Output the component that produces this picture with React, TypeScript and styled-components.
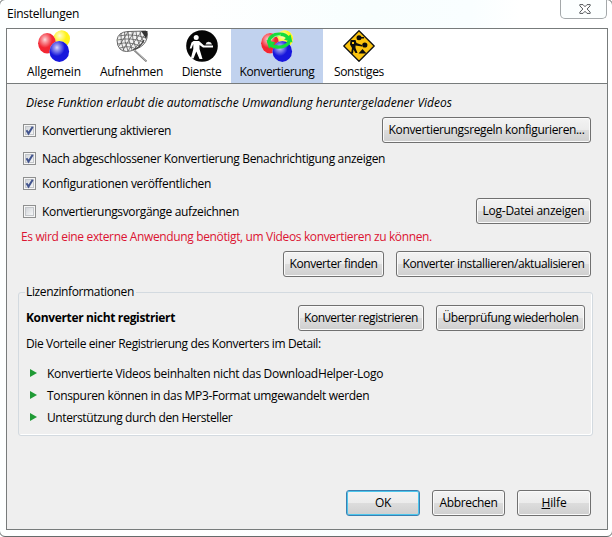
import React from 'react';
import styled, { createGlobalStyle, css } from 'styled-components';

const GlobalStyle = createGlobalStyle`
  * { box-sizing: border-box; }
  html, body { margin: 0; padding: 0; overflow: hidden; background: #fff; }
  body { font: 12px/16px "Open Sans", "Noto Sans", sans-serif; color: #000; }
`;

const Desktop = styled.div`
  width: 612px;
  height: 537px;
  overflow: hidden;
`;

const Window = styled.div`
  display: flex;
  flex-direction: column;
  width: 614px;
  height: 538px;
  margin: -1px 0 0 -1px;
  padding: 0 5px 6px 6px;
  border: 1px solid #666b6b;
  border-radius: 6px;
  background: linear-gradient(90deg, #fdffff 0, #fff 30%, #f8fefe 60%, #f9feff 77%, #fff 85%);
`;

const TitleBar = styled.header`
  display: flex;
  justify-content: space-between;
  height: 28px;
`;

const Text = styled.span<{ $track?: number; $color?: string; $bold?: boolean; $italic?: boolean }>`
  display: block;
  padding-top: 1px;
  margin-bottom: -1px;
  white-space: nowrap;
  letter-spacing: ${p => p.$track ?? -0.35}px;
  color: ${p => p.$color ?? '#000'};
  font-weight: ${p => (p.$bold ? 700 : 400)};
  font-style: ${p => (p.$italic ? 'italic' : 'normal')};
`;

const Title = styled(Text)`
  padding: 6px 0 0 1px;
`;

const CloseButton = styled.button`
  display: flex;
  align-items: center;
  justify-content: center;
  width: 47px;
  height: 19px;
  padding: 0 0 0 2px;
  border: 1px solid #a3a8aa;
  border-top: 0;
  border-radius: 0 0 5px 5px;
  background: #fcffff;
`;

const Client = styled.main`
  display: flex;
  flex-direction: column;
  width: 602px;
  height: 502px;
  border: 1px solid #777b7b;
  background: #efefef;
`;

const Toolbar = styled.nav`
  display: flex;
  gap: 1px;
  height: 55px;
  padding-left: 11px;
  border-bottom: 1px solid #777b7b;
  background: #fff;
`;

const Tab = styled.div<{ $width: number; $active?: boolean }>`
  display: flex;
  flex-direction: column;
  align-items: center;
  width: ${p => p.$width}px;
  padding-top: 1px;
  gap: 1px;
  background: ${p => (p.$active ? '#c1d2ee' : 'transparent')};
`;

const TabIcon = styled.svg`
  display: block;
  width: 32px;
  height: 32px;
  flex: none;
`;

const Content = styled.section`
  display: flex;
  flex-direction: column;
  flex: 1;
  padding: 10px 14px 13px 11px;
`;

const Intro = styled(Text)`
  padding-left: 8px;
`;

const Row = styled.div<{ $gap: number; $height?: number }>`
  display: flex;
  align-items: center;
  justify-content: space-between;
  height: ${p => p.$height ?? 26}px;
  margin-top: ${p => p.$gap}px;
  padding: 0 2px 0 5px;
`;

const Warning = styled(Text)`
  margin-top: 4px;
  padding-left: 3px;
`;

const Buttons = styled.div`
  display: flex;
  justify-content: flex-end;
  gap: 12px;
`;

const ActionRow = styled(Buttons)`
  margin-top: 7px;
  padding-right: 2px;
`;

const Footer = styled(Buttons)`
  margin-top: auto;
  padding-right: 2px;
`;

const Button = styled.button<{ $width: number; $track?: number; $primary?: boolean }>`
  width: ${p => p.$width}px;
  height: 26px;
  padding: 0;
  border: 1px solid #707070;
  border-radius: 3px;
  background: linear-gradient(#f3f3f3 0, #ebebeb 50%, #dcdcdc 52%, #cfcfcf 100%);
  box-shadow: inset 0 0 0 1px #fafafa;
  font: 12px/16px "Open Sans", "Noto Sans", sans-serif;
  letter-spacing: ${p => p.$track ?? -0.35}px;
  white-space: nowrap;
  color: #000;
  ${p =>
    p.$primary &&
    css`
      border-color: #3c7fb1;
      box-shadow: inset 0 0 0 1px #4cc6ec;
    `}
`;

const CheckLabel = styled.label`
  display: flex;
  gap: 6px;
`;

const Box = styled.span`
  display: block;
  width: 13px;
  height: 13px;
  margin-top: 2px;
  border: 1px solid #8e8f8f;
  background: linear-gradient(135deg, #c9cdd2, #f4f5f6 80%);
  box-shadow: inset 0 0 0 1px #f6f6f6, inset 0 0 0 2px #c3c6ca;
`;

const Tick = styled.svg`
  display: block;
  width: 11px;
  height: 11px;
`;

const Group = styled.fieldset`
  display: flex;
  flex-direction: column;
  min-width: 0;
  height: 152px;
  margin: 7px 0 0;
  padding: 5px 7px 0;
  border: 1px solid #d3dae0;
  border-radius: 3px;
  box-shadow: inset -1px -1px 0 #fff;
`;

const Legend = styled.legend`
  padding: 0 2px 0 1px;
  margin-left: -1px;
  letter-spacing: -0.37px;
`;

const LicenseRow = styled.div`
  display: flex;
  justify-content: space-between;
  height: 26px;
`;

const Status = styled(Text)`
  padding-top: 5px;
`;

const Benefits = styled.ul`
  display: flex;
  flex-direction: column;
  gap: 6px;
  margin: 14px 0 0;
  padding: 0 0 0 4px;
  list-style: none;
`;

const Benefit = styled.li`
  display: flex;
  gap: 10px;
  height: 16px;
`;

const Arrow = styled.svg`
  display: block;
  width: 7px;
  height: 8px;
  margin-top: 4px;
`;

const Balls = ({ id }: { id: string }) => (
  <>
    <defs>
      {[['r', '#f32632'], ['y', '#fff21a'], ['b', '#1717dc']].map(([k, c]) => (
        <radialGradient key={k} id={id + k} cx="0.38" cy="0.32" r="0.62">
          <stop offset="0" stopColor={c} stopOpacity="0.15" />
          <stop offset="0.2" stopColor={c} stopOpacity="0.45" />
          <stop offset="0.65" stopColor={c} />
          <stop offset="1" stopColor={c} />
        </radialGradient>
      ))}
    </defs>
    <ellipse cx="23.7" cy="8.8" rx="8.3" ry="8.6" fill="#fff" />
    <ellipse cx="23.7" cy="8.8" rx="8.3" ry="8.6" fill={`url(#${id}y)`} />
    <ellipse cx="9.1" cy="13.3" rx="9" ry="10.2" fill="#fff" />
    <ellipse cx="9.1" cy="13.3" rx="9" ry="10.2" fill={`url(#${id}r)`} />
    <ellipse cx="21.3" cy="21.4" rx="9.8" ry="10.5" fill="#fff" />
    <ellipse cx="21.3" cy="21.4" rx="9.8" ry="10.5" fill={`url(#${id}b)`} />
  </>
);

const BallsIcon = () => (
  <TabIcon viewBox="0 0 32 32">
    <Balls id="g" />
  </TabIcon>
);

const ConvertIcon = () => (
  <TabIcon viewBox="0 0 32 32">
    <Balls id="c" />
    <g fill="none" stroke="#16dc3c" strokeWidth="3.4">
      <path d="M8 13C7 7 13 4 19 4.300Q25 4.500 27 8" />
      <path d="M28 11C28 15 21 17.500 16 17Q11 16.500 9 14.500" />
    </g>
    <path d="M23 9.500L31.500 12.500L29.500 4.500ZM14.500 12.500L5.500 10L8 18.500Z" fill="#16dc3c" />
    <path d="M10 10Q13 5.500 20 5" fill="none" stroke="#8df7a0" strokeWidth="1" />
  </TabIcon>
);

const NetIcon = () => (
  <TabIcon viewBox="0 0 32 32">
    <path d="M1 10Q2 2 12 1.500L30 1Q32 3 31 8Q29 16 20 19Q9 24 4 19Q1 16 1 10Z" fill="#f2f2f2" stroke="#666" />
    <g fill="none" stroke="#555" strokeWidth="0.75">
      <path d="M3 6Q16 3 30 8M1.500 10Q14 7 28 12M2 14Q13 11 24 16M4 18Q13 15 20 19" />
      <path d="M5 3Q4 12 8 21M8.500 2Q8 11 12 21M12 1.500Q12 10 16 20M16 1.500Q16 9 20 18.500M20 1.500Q20 8 24 16M24 1.500Q24 6 28 13" />
      <path d="M3 16L12 2M7 20L18 2M12 21L25 2M18 20L30 3" />
    </g>
    <path d="M25 1L31.500 1Q32 5 30 9Q28 5 25 1Z" fill="#333" />
    <path d="M28 10Q24 18 17 20" fill="none" stroke="#444" strokeWidth="1.300" />
    <path d="M18.500 20.500L30.500 31.500" stroke="#777" strokeWidth="1.700" />
    <path d="M18.500 20L30 30.800" stroke="#ddd" strokeWidth="0.600" />
  </TabIcon>
);

const ServicesIcon = () => (
  <TabIcon viewBox="0 0 32 32">
    <circle cx="16" cy="16" r="15.800" fill="#050505" />
    <circle cx="10.200" cy="7.500" r="2.500" fill="#fff" />
    <path
      d="M7.500 11H13L18 15.500H27V17.500H17L13.500 15V19L16.500 29H13.500L10.300 21.500L7.500 28.500H4.800L7.300 19V14L5.500 18.500H3.700L5.500 12.500Z"
      fill="#fff"
    />
    <path d="M19.500 14.500Q20 12 22.500 11.800Q25.500 12 26 14.500Z" fill="#eee" />
  </TabIcon>
);

const RoadworkIcon = () => (
  <TabIcon viewBox="0 0 32 32">
    <path d="M16 0.800L31.200 16L16 31.200L0.800 16Z" fill="#fcc40e" stroke="#111" strokeWidth="1.300" strokeLinejoin="round" />
    <g fill="#0c0c0c">
      <circle cx="16" cy="7.800" r="2.500" />
      <circle cx="21.800" cy="15" r="2.600" />
      <path d="M7.500 10H12.500L13.500 13L19 15V16.500L12.500 15.500V18L14.500 23H12.500L10.500 19.500L10 23.500H8L9 18L7 14.500Z" />
      <path d="M15.500 23.500L19.500 19L23.500 23.500Z" />
      <path d="M16 7H21V8.500H16Z" />
    </g>
    <path d="M9 12H11V14H9Z" fill="#fcc40e" />
  </TabIcon>
);

const Check = ({ text, checked, track }: { text: string; checked?: boolean; track: number }) => (
  <CheckLabel>
    <Box>
      {checked && (
        <Tick viewBox="0 0 11 11">
          <path d="M2.500 5.200L4.500 8.500L8.700 1.700" fill="none" stroke="#42548e" strokeWidth="2" />
        </Tick>
      )}
    </Box>
    <Text $track={track}>{text}</Text>
  </CheckLabel>
);

const benefits = [
  { text: 'Konvertierte Videos beinhalten nicht das DownloadHelper-Logo', track: -0.32 },
  { text: 'Tonspuren können in das MP3-Format umgewandelt werden', track: -0.33 },
  { text: 'Unterstützung durch den Hersteller', track: -0.4 },
];

export default function App() {
  return (
    <Desktop>
      <GlobalStyle />
      <Window>
        <TitleBar>
          <Title $track={-0.24}>Einstellungen</Title>
          <CloseButton aria-label="Schließen">
            <svg width="12" height="10" viewBox="0 0 12 10">
              <path
                d="M0.800 0.600H4L6 2.700L8 0.600H11.200V1.800L8.100 5L11.200 8.200V9.400H8L6 7.300L4 9.400H0.800V8.200L3.900 5L0.800 1.800Z"
                fill="#fff"
                stroke="#55595c"
              />
            </svg>
          </CloseButton>
        </TitleBar>
        <Client>
          <Toolbar>
            <Tab $width={72}>
              <BallsIcon />
              <Text $track={-0.13}>Allgemein</Text>
            </Tab>
            <Tab $width={81}>
              <NetIcon />
              <Text $track={-0.29}>Aufnehmen</Text>
            </Tab>
            <Tab $width={57}>
              <ServicesIcon />
              <Text $track={-0.45}>Dienste</Text>
            </Tab>
            <Tab $width={92} $active>
              <ConvertIcon />
              <Text $track={-0.37}>Konvertierung</Text>
            </Tab>
            <Tab $width={70}>
              <RoadworkIcon />
              <Text>Sonstiges</Text>
            </Tab>
          </Toolbar>
          <Content>
            <Intro $italic $track={-0.01}>
              Diese Funktion erlaubt die automatische Umwandlung heruntergeladener Videos
            </Intro>
            <Row $gap={7}>
              <Check checked text="Konvertierung aktivieren" track={-0.37} />
              <Button $width={209}>Konvertierungsregeln konfigurieren...</Button>
            </Row>
            <Row $gap={7} $height={16}>
              <Check checked text="Nach abgeschlossener Konvertierung Benachrichtigung anzeigen" track={-0.32} />
            </Row>
            <Row $gap={9} $height={16}>
              <Check checked text="Konfigurationen veröffentlichen" track={-0.29} />
            </Row>
            <Row $gap={7}>
              <Check text="Konvertierungsvorgänge aufzeichnen" track={-0.34} />
              <Button $width={115} $track={-0.25}>Log-Datei anzeigen</Button>
            </Row>
            <Warning $color="#dc1432" $track={-0.36}>
              Es wird eine externe Anwendung benötigt, um Videos konvertieren zu können.
            </Warning>
            <ActionRow>
              <Button $width={101} $track={-0.4}>Konverter finden</Button>
              <Button $width={195} $track={-0.41}>Konverter installieren/aktualisieren</Button>
            </ActionRow>
            <Group>
              <Legend>Lizenzinformationen</Legend>
              <LicenseRow>
                <Status $bold>Konverter nicht registriert</Status>
                <Buttons>
                  <Button $width={126} $track={-0.43}>Konverter registrieren</Button>
                  <Button $width={149} $track={-0.41}>Überprüfung wiederholen</Button>
                </Buttons>
              </LicenseRow>
              <Status $track={-0.39}>Die Vorteile einer Registrierung des Konverters im Detail:</Status>
              <Benefits>
                {benefits.map(b => (
                  <Benefit key={b.text}>
                    <Arrow viewBox="0 0 7 8">
                      <path d="M0 0L7 4L0 8Z" fill="#1f9a35" />
                    </Arrow>
                    <Text $track={b.track}>{b.text}</Text>
                  </Benefit>
                ))}
              </Benefits>
            </Group>
            <Footer>
              <Button $width={74} $primary>OK</Button>
              <Button $width={73}>Abbrechen</Button>
              <Button $width={74} $track={-0.14}>
                <u>H</u>ilfe
              </Button>
            </Footer>
          </Content>
        </Client>
      </Window>
    </Desktop>
  );
}
